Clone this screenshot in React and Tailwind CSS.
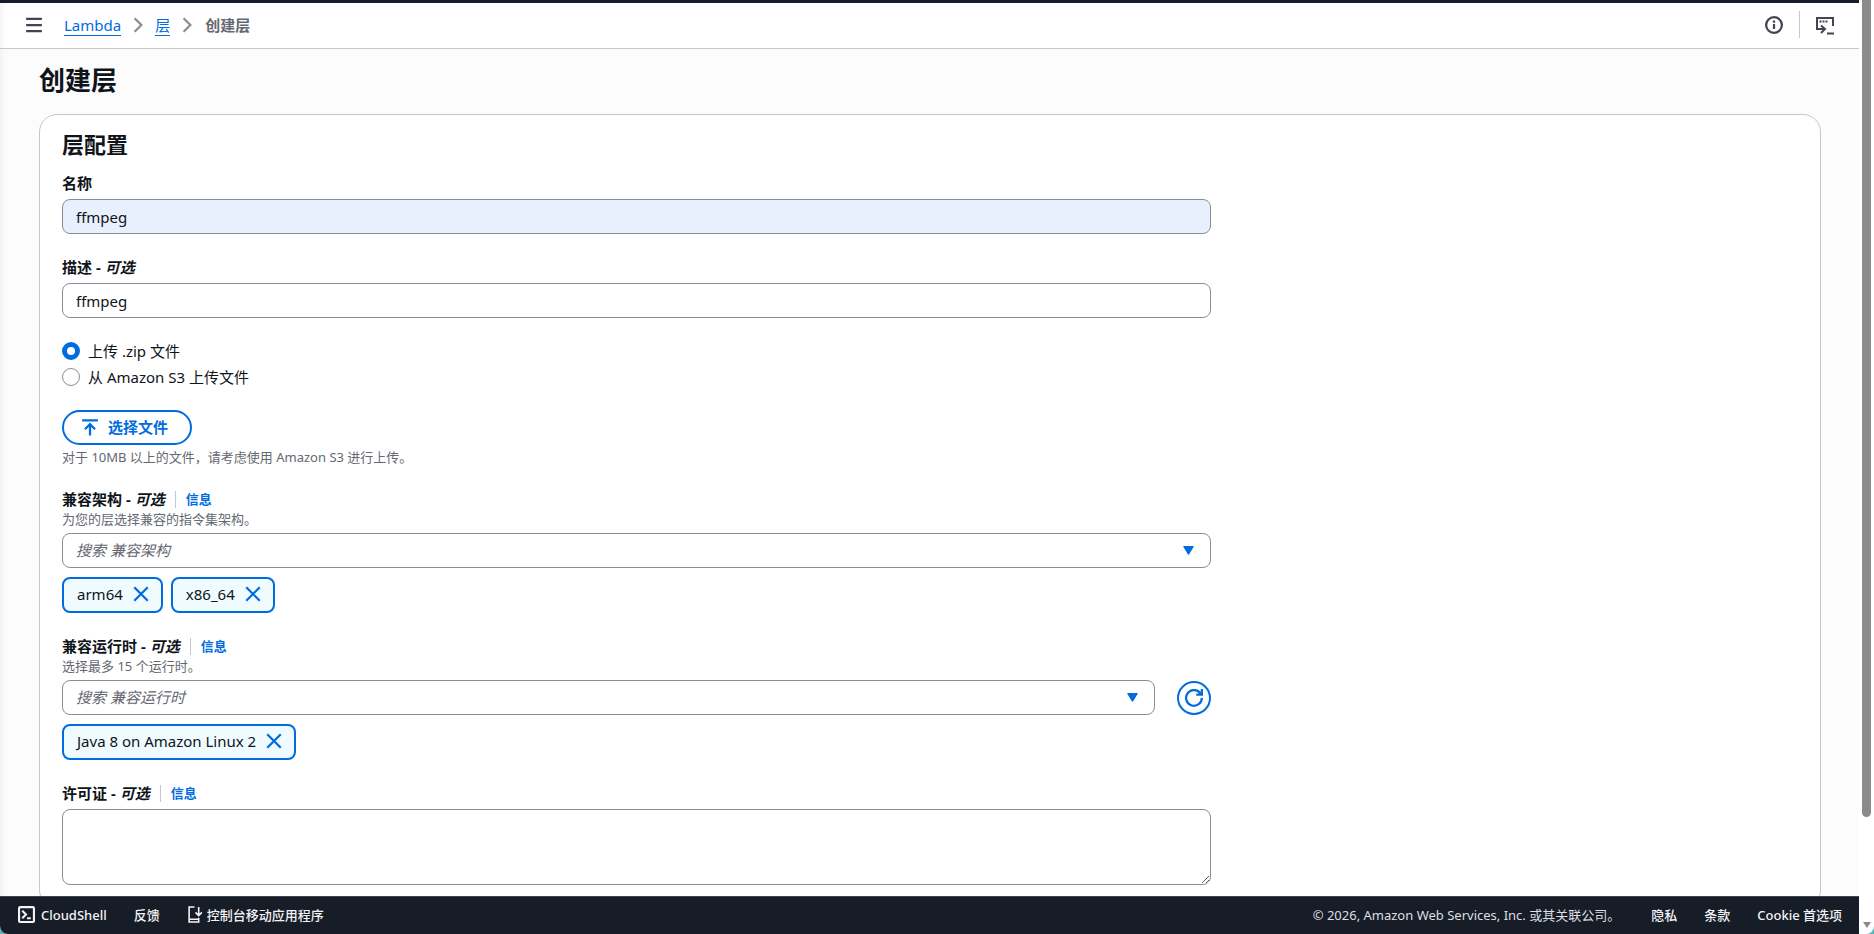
const strokeIcon = { fill: 'none', stroke: 'currentColor', strokeWidth: 2 };

const Icon = ({ children, className = 'size-[18px]', viewBox = '0 0 16 16' }) => (
  <svg viewBox={viewBox} className={`shrink-0 ${className}`} {...strokeIcon} aria-hidden="true">
    {children}
  </svg>
);

const Chevron = () => (
  <li aria-hidden="true" className="text-[#8c8c94]">
    <Icon><path d="m5 2 6 6-6 6" /></Icon>
  </li>
);

const Label = ({ id, text, optional, info }) => (
  <div className="flex items-center leading-[22px]">
    <label htmlFor={id} className="font-bold">
      {text}
      {optional && <> - <i>可选</i></>}
    </label>
    {info && (
      <a href="#info" className="ml-[10px] border-l border-[#c6c6cd] pl-[10px] text-[13px] leading-[17px] font-bold text-[#006ce0]">
        信息
      </a>
    )}
  </div>
);

const field = 'w-full rounded-lg border border-[#8c8c94] px-[13px]';

const Search = ({ id, placeholder }) => (
  <div className={`${field} flex h-[35px] items-center bg-white pr-4`}>
    <input id={id} placeholder={placeholder} className="min-w-0 flex-1 bg-transparent pb-px outline-none placeholder:text-[#656871] placeholder:italic" />
    <svg viewBox="0 0 11 9" className="h-[9px] w-[11px] fill-[#006ce0]" aria-hidden="true">
      <path d="M.8 0h9.400q.9.100.4.900L6.200 8.300q-.7.900-1.400 0L.4.900Q0 .1.800 0Z" />
    </svg>
  </div>
);

const Token = ({ children }) => (
  <div className="flex h-9 items-center gap-[9px] rounded-lg border-2 border-[#006ce0] bg-[#f0fbff] pr-[11px] pb-[2px] pl-[13px]">
    <span>{children}</span>
    <button type="button" aria-label={`移除 ${children}`} className="text-[#006ce0]">
      <Icon><path d="m2 2 12 12M14 2 2 14" /></Icon>
    </button>
  </div>
);

const Radio = ({ label, ...props }) => (
  <label className="flex items-center gap-2 leading-[22px]">
    <input
      type="radio"
      name="source"
      className="size-[18px] appearance-none rounded-full border border-[#8c8c94] bg-white checked:border-[5px] checked:border-[#006ce0]"
      {...props}
    />
    {label}
  </label>
);

export default function App() {
  return (
    <div className="h-screen bg-[#55b8b6] font-['Noto_Sans','Noto_Sans_CJK_SC',sans-serif] text-[15px] leading-[22px] text-[#0f141a]">
      <div className="flex h-full overflow-hidden rounded-b-lg bg-white">
        <div className="flex min-w-0 flex-1 flex-col border-t-[3px] border-[#161d26]">
          <header className="flex h-[46px] shrink-0 items-center border-b border-[#c6c6cd] px-[25px] pb-[2px] shadow-[inset_8px_0_8px_-8px_rgba(0,0,0,0.08)]">
            <button type="button" aria-label="打开导航" className="mr-[21px] text-[#424650]">
              <Icon><path d="M1 2.500h14M1 8h14M1 13.500h14" /></Icon>
            </button>
            <nav aria-label="breadcrumb" className="flex-1">
              <ol className="flex items-center gap-2">
                <li><a href="#lambda" className="border-b border-[#006ce0] text-[#006ce0]">Lambda</a></li>
                <Chevron />
                <li><a href="#layers" className="border-b border-[#006ce0] text-[#006ce0]">层</a></li>
                <Chevron />
                <li className="pl-px font-bold text-[#656871]">创建层</li>
              </ol>
            </nav>
            <button type="button" aria-label="信息" className="text-[#424650]">
              <Icon><circle cx="8" cy="8" r="7" /><path d="M8 11.500V7M8 6V4" /></Icon>
            </button>
            <span className="mx-4 h-[27px] w-px bg-[#c6c6cd]" />
            <button type="button" aria-label="CloudShell" className="pt-[3px] text-[#424650]">
              <Icon viewBox="0 0 18 18">
                <path d="M9 12H1V1h16v8M5 8.500 9 12l-4 4M11 16.500h7" />
                <path d="M3.500 4.500h8" strokeDasharray="2 1" />
              </Icon>
            </button>
          </header>

          <main className="min-h-0 flex-1 overflow-hidden bg-[#fcfcfd] pt-[15px] pr-[38px] pl-[39px] shadow-[inset_8px_0_8px_-8px_rgba(0,0,0,0.08)]">
            <h1 className="text-[26px] leading-[33px] font-bold">创建层</h1>
            <section className="mt-[17px] rounded-[18px] border border-[#c6c6cd] bg-white px-[22px] pt-4 pb-[22px]">
              <h2 className="text-[22px] leading-[26px] font-bold">层配置</h2>
              <form className="mt-[15px] flex w-[1149px] max-w-full flex-col gap-[22px]">
                <div className="flex flex-col gap-[5px]">
                  <Label id="name" text="名称" />
                  <input id="name" defaultValue="ffmpeg" className={`${field} h-[35px] bg-[#e8f0fe]`} />
                </div>
                <div className="flex flex-col gap-[5px]">
                  <Label id="description" text="描述" optional />
                  <input id="description" defaultValue="ffmpeg" className={`${field} h-[35px] bg-white`} />
                </div>
                <div className="flex flex-col gap-1">
                  <Radio label="上传 .zip 文件" defaultChecked />
                  <Radio label="从 Amazon S3 上传文件" />
                </div>
                <div className="flex flex-col items-start gap-[3px]">
                  <button type="button" className="flex h-[35px] items-center gap-[9px] rounded-full border-2 border-[#006ce0] pr-[22px] pb-px pl-[17px] font-bold text-[#006ce0]">
                    <Icon><path d="M1 2h14M8 15.500V6M3.500 10 8 5.500l4.500 4.500" /></Icon>
                    选择文件
                  </button>
                  <p className="text-[13px] leading-[18px] text-[#656871]">对于 10MB 以上的文件，请考虑使用 Amazon S3 进行上传。</p>
                </div>
                <div className="flex flex-col">
                  <Label id="architectures" text="兼容架构" optional info />
                  <p className="mb-[5px] text-[13px] leading-[18px] text-[#656871]">为您的层选择兼容的指令集架构。</p>
                  <Search id="architectures" placeholder="搜索 兼容架构" />
                  <div className="mt-[9px] flex gap-2">
                    <Token>arm64</Token>
                    <Token>x86_64</Token>
                  </div>
                </div>
                <div className="flex flex-col">
                  <Label id="runtimes" text="兼容运行时" optional info />
                  <p className="mb-[5px] text-[13px] leading-[18px] text-[#656871]">选择最多 15 个运行时。</p>
                  <div className="flex items-center gap-[22px]">
                    <Search id="runtimes" placeholder="搜索 兼容运行时" />
                    <button type="button" aria-label="刷新" className="flex size-[34px] shrink-0 items-center justify-center rounded-full border-2 border-[#006ce0] text-[#006ce0]">
                      <Icon><path d="M15 8a7 7 0 1 1-2-5l1.500 1.500M15 0v5h-5" /></Icon>
                    </button>
                  </div>
                  <div className="mt-[9px] flex">
                    <Token>Java 8 on Amazon Linux 2</Token>
                  </div>
                </div>
                <div className="flex flex-col gap-[5px]">
                  <Label id="license" text="许可证" optional info />
                  <textarea id="license" className={`${field} h-[76px] resize-y bg-white py-1`} />
                </div>
              </form>
            </section>
          </main>

          <footer className="flex h-[38px] shrink-0 items-center gap-[27px] border-t border-[#424650] bg-[#161d26] pr-[17px] pb-[2px] pl-[18px] text-[13px] leading-[18px] font-medium text-[#f3f3f7]">
            <button type="button" className="flex items-center gap-[6px]">
              <Icon className="size-[17px]"><rect x="1" y="1" width="14" height="14" rx="1" /><path d="m4 4.500 3.500 3.500L4 11.500M8.500 11.500H12" /></Icon>
              CloudShell
            </button>
            <button type="button">反馈</button>
            <a href="#mobile" className="flex items-center gap-[3px]">
              <Icon className="size-[17px]"><path d="M7 1H2v14h9v-4M2 12.500h9M11 1v8M8 6l3 3 3-3" strokeWidth="1.500" /></Icon>
              控制台移动应用程序
            </a>
            <p className="mr-1 ml-auto font-normal text-[#dedee3]">© 2026, Amazon Web Services, Inc. 或其关联公司。</p>
            <a href="#privacy">隐私</a>
            <a href="#terms">条款</a>
            <a href="#cookies">Cookie 首选项</a>
          </footer>
        </div>
        <div className="flex w-[15px] flex-col items-center justify-between pb-[6px]" aria-hidden="true">
          <div className="h-[88%] w-[9px] rounded-b-full bg-[#8b8b8b]" />
          <svg viewBox="0 0 8 6" className="h-[6px] w-2 fill-[#8b8b8b]"><path d="M0 0h8L4 6Z" /></svg>
        </div>
      </div>
    </div>
  );
}
